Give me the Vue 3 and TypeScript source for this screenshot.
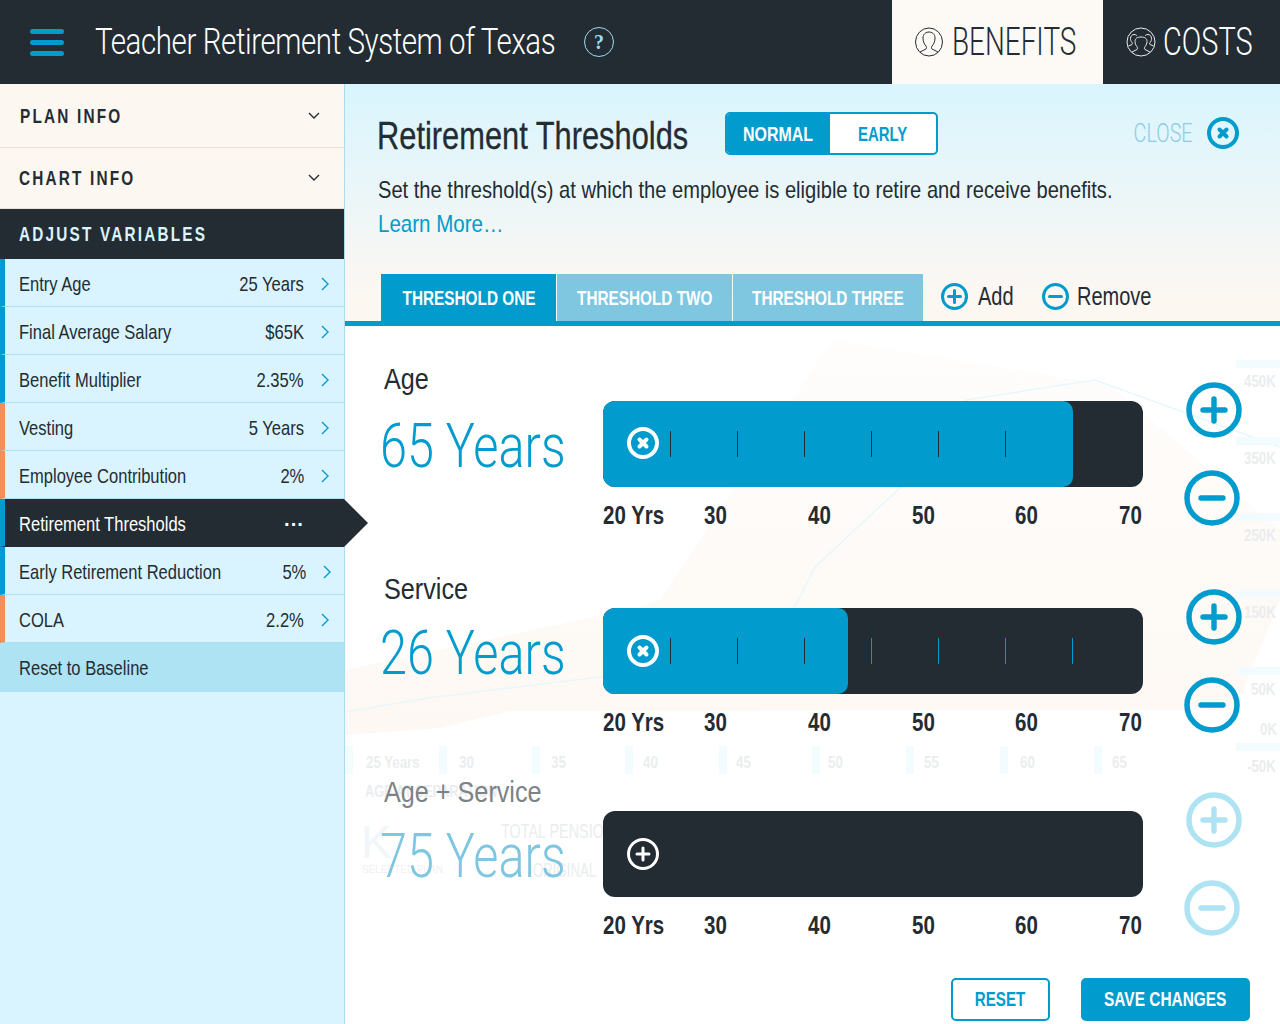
<script setup lang="ts">
interface Row { label: string; value: string; accent: 'blue' | 'orange'; active?: boolean }
const rows: Row[] = [
  { label: 'Entry Age', value: '25 Years', accent: 'blue' },
  { label: 'Final Average Salary', value: '$65K', accent: 'blue' },
  { label: 'Benefit Multiplier', value: '2.35%', accent: 'blue' },
  { label: 'Vesting', value: '5 Years', accent: 'orange' },
  { label: 'Employee Contribution', value: '2%', accent: 'orange' },
  { label: 'Retirement Thresholds', value: '···', accent: 'blue', active: true },
  { label: 'Early Retirement Reduction', value: '5%', accent: 'blue' },
  { label: 'COLA', value: '2.2%', accent: 'orange' },
]
interface Slider { title: string; value: string; fill: number; on: boolean; ticks: string[] }
const sliders: Slider[] = [
  { title: 'Age', value: '65 Years', fill: 470, on: true, ticks: ['d','d','d','d','d','d'] },
  { title: 'Service', value: '26 Years', fill: 245, on: true, ticks: ['d','d','d','b','b','b','b'] },
  { title: 'Age + Service', value: '75 Years', fill: 0, on: false, ticks: [] },
]
const axis = ['20 Yrs', '30', '40', '50', '60', '70']
interface Ghost { t: string; x: number; y: number; c?: string; sx?: number }
const ghostTexts: Ghost[] = [
  { t: '450K', x: 1244, y: 387 }, { t: '350K', x: 1244, y: 464 }, { t: '250K', x: 1244, y: 541 },
  { t: '150K', x: 1244, y: 618 }, { t: '50K', x: 1251, y: 695 }, { t: '0K', x: 1260, y: 735 }, { t: '-50K', x: 1247, y: 772 },
  { t: '25 Years', x: 366, y: 768 }, { t: '30', x: 459, y: 768 }, { t: '35', x: 551, y: 768 }, { t: '40', x: 643, y: 768 },
  { t: '45', x: 736, y: 768 }, { t: '50', x: 828, y: 768 }, { t: '55', x: 924, y: 768 }, { t: '60', x: 1020, y: 768 }, { t: '65', x: 1112, y: 768 },
  { t: 'AGE AT SEPARATION', x: 365, y: 797, sx: .8 },
  { t: 'TOTAL PENSION', x: 501, y: 838, c: 'g2', sx: .72 }, { t: 'ORIGINAL', x: 533, y: 877, c: 'g2', sx: .66 },
  { t: 'K', x: 361, y: 858, c: 'g3', sx: 1 },
  { t: 'SELECTED PLAN', x: 362, y: 873, c: 'g4', sx: .9 },
]
</script>

<template>
  <div class="page">
    <header class="top">
      <div class="burger"><i></i><i></i><i></i></div>
      <h1 class="brand"><span>Teacher Retirement System of Texas</span></h1>
      <span class="help">?</span>
      <div class="spacer"></div>
      <div class="tab-b">
        <svg width="28" height="30" viewBox="0 0 28 30" fill="none" stroke="#232c33" stroke-width="1"><ellipse cx="14" cy="15" rx="13.500" ry="14"/><path d="M5 25l6-3c1-1 .5-2 0-3-2-2-3-5-3-8 0-4 3-6 6-6s6 2 6 6c0 3-1 6-3 8-.5 1-1 2 0 3l6 3"/></svg>
        <span class="txt">BENEFITS</span>
      </div>
      <div class="tab-c">
        <svg width="30" height="30" viewBox="0 0 30 30" fill="none" stroke="#e8ecee" stroke-width="1"><circle cx="15" cy="15" r="14"/><path d="M6 25l5-2.500c1-.7.5-2-.2-3-1-1.500-1.800-3-1.800-5 0-3 2-4.500 6-4.500s6 1.500 6 4.500c0 2-.8 3.500-1.800 5-.7 1-1.200 2.300-.2 3l5 2.500"/><path d="M2.500 19l3.500-1.500c.8-.5.3-1.500-.2-2.200-1-1.300-1.300-2.500-1.300-4 0-2 1.500-3.800 3.500-3.800 1.200 0 2 .3 2.800 1M27.500 19l-3.500-1.500c-.8-.5-.3-1.500.2-2.200 1-1.300 1.300-2.500 1.300-4 0-2-1.500-3.800-3.500-3.800-1.200 0-2 .3-2.800 1"/></svg>
        <span class="txt">COSTS</span>
      </div>
    </header>
    <div class="body">
      <aside class="side">
        <div class="acc first"><span class="cap">PLAN INFO</span><svg width="12" height="8" viewBox="0 0 12 8" fill="none" stroke="#232c33" stroke-width="1.4"><path d="M1 1l5 5 5-5"/></svg></div>
        <div class="acc second"><span class="cap">CHART INFO</span><svg width="12" height="8" viewBox="0 0 12 8" fill="none" stroke="#232c33" stroke-width="1.4"><path d="M1 1l5 5 5-5"/></svg></div>
        <div class="adj"><span class="cap">ADJUST VARIABLES</span></div>
        <div v-for="r in rows" :key="r.label" class="row" :class="[r.accent, { active: r.active }]">
          <span class="lbl">{{ r.label }}</span>
          <span class="val">{{ r.value }}</span>
          <svg v-if="!r.active" class="chev" width="8" height="14" viewBox="0 0 8 14" fill="none" stroke="#019bcd" stroke-width="1.4"><path d="M1 1l6 6-6 6"/></svg>
        </div>
        <div class="reset-row"><span class="lbl">Reset to Baseline</span></div>
      </aside>
      <main class="main">
        <section class="intro">
          <div class="head">
            <h2><span>Retirement Thresholds</span></h2>
            <div class="toggle"><span class="on"><b>NORMAL</b></span><span class="off"><b>EARLY</b></span></div>
            <div class="spacer"></div>
            <span class="close">CLOSE</span>
            <svg class="closex" width="34" height="34" viewBox="0 0 34 34" fill="none" stroke="#019bcd"><circle cx="17" cy="17" r="14" stroke-width="4"/><path d="M13.500 13.500l7 7M20.500 13.500l-7 7" stroke-width="4" stroke-linecap="round"/></svg>
          </div>
          <p class="desc"><span>Set the threshold(s) at which the employee is eligible to retire and receive benefits.</span></p>
          <a class="more"><span>Learn More…</span></a>
          <div class="tabs">
            <div class="t cur"><span>THRESHOLD ONE</span></div>
            <div class="t two"><span>THRESHOLD TWO</span></div>
            <div class="t three"><span>THRESHOLD THREE</span></div>
            <div class="act add"><svg width="27" height="27" viewBox="0 0 27 27" fill="none" stroke="#019bcd"><circle cx="13.500" cy="13.500" r="12" stroke-width="3"/><path d="M13.500 7.500v12M7.500 13.500h12" stroke-width="3" stroke-linecap="round"/></svg><span>Add</span></div>
            <div class="act rem"><svg width="27" height="27" viewBox="0 0 27 27" fill="none" stroke="#019bcd"><circle cx="13.500" cy="13.500" r="12" stroke-width="3"/><path d="M7.500 13.500h12" stroke-width="3" stroke-linecap="round"/></svg><span>Remove</span></div>
          </div>
        </section>
        <section class="panel">
          <svg class="ghost" width="935" height="698" viewBox="345 326 935 698" fill="none">
            <defs><linearGradient id="cream" x1="0" y1="0" x2="0" y2="1"><stop offset="0" stop-color="#fdf7f1" stop-opacity=".25"/><stop offset="1" stop-color="#fdf7f1" stop-opacity=".85"/></linearGradient></defs>
            <path d="M345 670L640 607L660 600L832 340L1110 385L1280 530L1280 600L1235 710L510 711L440 728L345 735Z" fill="url(#cream)"/>
            <path d="M345 712L428 698L640 672L770 650L797 603L815 567L901 487L966 400L1095 380L1280 447" stroke="#e8f7fc" stroke-width="1.500"/>
            <g fill="#f2fbfe"><rect x="1236" y="360" width="44" height="8"/><rect x="1236" y="437" width="44" height="8"/><rect x="1236" y="513" width="44" height="8"/><rect x="1236" y="590" width="44" height="8"/><rect x="1236" y="667" width="44" height="8"/><rect x="1236" y="743" width="44" height="8"/>
              <rect x="345" y="746" width="8" height="28"/><rect x="439" y="746" width="8" height="28"/><rect x="532" y="746" width="8" height="28"/><rect x="625" y="746" width="8" height="28"/><rect x="719" y="746" width="8" height="28"/><rect x="812" y="746" width="8" height="28"/><rect x="906" y="746" width="8" height="28"/><rect x="1000" y="746" width="8" height="28"/><rect x="1094" y="746" width="8" height="28"/></g>
            <g class="gt" fill="#eaedee">
              <text v-for="g in ghostTexts" :key="g.t + g.x" :class="g.c" :transform="`translate(${g.x} ${g.y}) scale(${g.sx ?? 0.83} 1)`">{{ g.t }}</text>
            </g>
          </svg>
          <div v-for="(s, i) in sliders" :key="s.title" class="slider" :class="'s' + i">
            <div class="left">
              <div class="title"><span>{{ s.title }}</span></div>
              <div class="big">{{ s.value }}</div>
            </div>
            <div class="track-col">
              <div class="track">
                <div v-if="s.fill" class="fill" :style="{ width: s.fill + 'px' }"></div>
                <svg class="knob" width="32" height="32" viewBox="0 0 32 32" fill="none" stroke="#fff">
                  <template v-if="s.on">
                    <circle cx="16" cy="16" r="14" stroke-width="4"/>
                    <path d="M12.500 12.500l7 7M19.500 12.500l-7 7" stroke-width="4" stroke-linecap="round"/>
                  </template>
                  <template v-else>
                    <circle cx="16" cy="16" r="14.500" stroke-width="3"/>
                    <path d="M16 10v12M10 16h12" stroke-width="3" stroke-linecap="round"/>
                  </template>
                </svg>
                <div class="ticks"><i v-for="(t, k) in s.ticks" :key="k" :class="t"></i></div>
              </div>
              <div class="axis"><div v-for="a in axis" :key="a"><span>{{ a }}</span></div></div>
            </div>
            <div class="steps" :class="{ dim: !s.on }">
              <svg class="plus" width="56" height="56" viewBox="0 0 56 56" fill="none" stroke="currentColor"><circle cx="28" cy="28" r="25" stroke-width="5.500"/><path d="M28 17v22M17 28h22" stroke-width="5.400" stroke-linecap="round"/></svg>
              <svg class="minus" width="56" height="56" viewBox="0 0 56 56" fill="none" stroke="currentColor"><circle cx="28" cy="28" r="25" stroke-width="5.500"/><path d="M17 28h22" stroke-width="5.400" stroke-linecap="round"/></svg>
            </div>
          </div>
          <div class="btns">
            <div class="reset"><span>RESET</span></div>
            <div class="save"><span>SAVE CHANGES</span></div>
          </div>
        </section>
      </main>
    </div>
  </div>
</template>

<style>
html, body { margin: 0; background: #fff; }
</style>

<style scoped>
.page { width: 1280px; height: 1024px; overflow: hidden; font-family: "Liberation Sans", Arial, sans-serif; color: #232c33; display: flex; flex-direction: column; }
.spacer { flex: 1; }
.top { height: 84px; background: #232c33; display: flex; align-items: center; flex: none; }
.burger { margin-left: 30px; width: 34px; display: flex; flex-direction: column; gap: 6px; flex: none; }
.burger i { display: block; height: 5px; border-radius: 3px; background: #019bcd; }
.brand { margin: 0 0 0 31px; width: 461px; font: 300 36px/1 Roboto, sans-serif; color: #fff; white-space: nowrap; flex: none; }
.brand span { display: inline-block; letter-spacing: -.5px; transform: scaleX(.819); transform-origin: left center; }
.help { margin-left: 28px; width: 30px; height: 30px; box-sizing: border-box; border: 1px solid #9fdcf2; border-radius: 50%; color: #9fdcf2; font: 700 20px/28px "Liberation Serif", serif; text-align: center; flex: none; }
.tab-b, .tab-c { height: 84px; display: flex; align-items: center; font: 300 38px/1 Roboto, sans-serif; box-sizing: border-box; flex: none; }
.tab-b { width: 211px; background: #fdf9f5; color: #232c33; padding-left: 23px; gap: 9px; }
.tab-c { width: 177px; color: #fff; padding-left: 23px; gap: 7px; }
.tab-b svg, .tab-c svg { flex: none; }
.txt { display: inline-block; transform-origin: left center; white-space: nowrap; flex: none; }
.tab-b .txt { transform: scaleX(.734); }
.tab-c .txt { transform: scaleX(.76); }
.body { flex: 1; display: flex; min-height: 0; }
.side { width: 345px; flex: none; box-sizing: border-box; background: #d9f4fe; border-right: 1px solid #a9dcee; }
.cap { display: inline-block; white-space: nowrap; font: 700 21px/1 "Liberation Sans", sans-serif; letter-spacing: 3px; transform: scaleX(.73); transform-origin: left center; }
.acc { background: #fdf7f1; display: flex; align-items: center; justify-content: space-between; padding-right: 24px; }
.acc .cap { margin-bottom: 1px; }
.first { height: 63px; border-bottom: 1px solid #f0ded2; padding-left: 20px; }
.second { height: 60px; border-bottom: 1px solid #f0ded2; padding-left: 19px; }
.adj { height: 50px; background: #232c33; color: #d9f4fe; display: flex; align-items: center; padding-left: 19px; }
.adj .cap { margin-bottom: 2px; }
.row { border-bottom: 1px solid #a9e0f2; border-left: 5px solid #019bcd; padding: 3px 15px 0 14px; box-sizing: content-box; display: flex; align-items: center; font-size: 21px; height: 44px; }
.row.orange { border-left-color: #f68d56; }
.lbl { flex: none; white-space: nowrap; display: inline-block; transform: scaleX(.787); transform-origin: left center; }
.val { margin-left: auto; margin-right: 17px; white-space: nowrap; transform: scaleX(.79); transform-origin: right center; }
.row.active { background: #232c33; color: #fff; position: relative; border-bottom-color: #232c33; }
.row.active::after { content: ""; position: absolute; right: -24px; top: 0; border-left: 24px solid #232c33; border-top: 24px solid transparent; border-bottom: 24px solid transparent; z-index: 3; }
.row.active .val { margin-right: 25px; font-size: 20px; font-weight: 700; transform: none; }
.chev { flex: none; }
.reset-row { height: 49px; background: #ade3f3; display: flex; align-items: center; padding-left: 19px; font-size: 21px; }
.main { flex: 1; display: flex; flex-direction: column; min-width: 0; }
.intro { height: 242px; flex: none; box-sizing: border-box; border-bottom: 5px solid #019bcd; background: linear-gradient(#d9f5fe, #fdf7f2 92%); display: flex; flex-direction: column; padding-left: 33px; }
.head { display: flex; align-items: center; margin-top: 28px; height: 43px; padding-right: 40px; flex: none; }
.head h2 { margin: 4px 0 0 -1px; font: 400 38px/1 "Liberation Sans", sans-serif; color: #232c33; width: 348px; white-space: nowrap; flex: none; }
.head h2 span { display: inline-block; transform: scaleX(.811); transform-origin: left center; -webkit-text-stroke: .3px #232c33; }
.toggle { display: flex; width: 213px; height: 43px; box-sizing: border-box; border: 2px solid #019bcd; border-radius: 5px; background: #fff; overflow: hidden; font: 700 21px/39px "Liberation Sans", sans-serif; color: #019bcd; flex: none; }
.toggle .on { width: 103px; background: #019bcd; color: #fff; text-align: center; flex: none; }
.toggle .off { flex: 1; text-align: center; }
.toggle b { display: inline-block; }
.toggle .on b { transform: scaleX(.76); }
.toggle .off b { transform: scaleX(.71); }
.close { color: #8fcbe3; font: 300 26px/1 Roboto, sans-serif; margin: 0 13px 2px 0; display: inline-block; transform: scaleX(.76); transform-origin: right center; flex: none; }
.closex { flex: none; margin-bottom: 2px; }
.desc { margin: 21px 0 0; font-size: 24px; line-height: 28px; white-space: nowrap; }
.desc span { display: inline-block; transform: scaleX(.838); transform-origin: left center; }
.more { margin-top: 6px; font-size: 24px; line-height: 28px; color: #019bcd; }
.more span { display: inline-block; transform: scaleX(.855); transform-origin: left center; }
.tabs { margin-top: auto; margin-left: 3px; display: flex; align-items: stretch; height: 47px; flex: none; }
.t { display: flex; align-items: center; justify-content: center; font: 700 21px/1 "Liberation Sans", sans-serif; color: #fff; background: #7fc6e1; white-space: nowrap; flex: none; }
.t span { flex: none; transform: scaleX(.73); }
.t.cur { width: 175px; background: #019bcd; }
.t.two { width: 175px; margin-left: 1px; }
.t.three { width: 190px; margin-left: 1px; }
.act { display: flex; align-items: center; margin-left: 18px; font-size: 25px; flex: none; }
.act.rem { margin-left: 20px; }
.act svg { flex: none; margin-top: -3px; }
.act span { display: inline-block; margin-left: 10px; transform: scaleX(.8); transform-origin: left center; margin-top: -3px; }
.act.rem span { margin-left: 8px; }
.panel { flex: 1; position: relative; background: #fff; }
.ghost { position: absolute; left: 0; top: 0; }
.gt { font: 700 16px "Liberation Sans", sans-serif; }
.g2 { font-size: 20px; font-weight: 400; }
.g3 { font-size: 46px; font-weight: 400; fill: #f1f6f8; }
.g4 { font-size: 11px; font-weight: 400; fill: #eff1f2; }
.slider { position: relative; display: flex; padding-left: 36px; box-sizing: border-box; }
.s0 { height: 207px; padding-top: 35px; }
.s1 { height: 203px; padding-top: 38px; }
.s2 { height: 240px; padding-top: 38px; }
.left { width: 222px; flex: none; }
.title { font-size: 30px; line-height: 36px; color: #232c33; padding-left: 3px; white-space: nowrap; }
.title span { display: inline-block; transform: scaleX(.84); transform-origin: left center; }
.s2 .title { color: #7d8286; }
.big { font: 300 62px/1 Roboto, sans-serif; color: #019bcd; margin: 15px 0 0 -1px; display: inline-block; transform: scaleX(.784); transform-origin: left center; white-space: nowrap; }
.s0 .big { margin-top: 18px; }
.s2 .big { color: #7fc6e1; }
.track-col { width: 540px; flex: none; margin-top: 37px; }
.s0 .track-col { margin-top: 40px; }
.track { position: relative; height: 86px; border-radius: 12px; background: #232c33; display: flex; align-items: center; overflow: hidden; }
.fill { position: absolute; left: 0; top: 0; bottom: 0; background: #019bcd; border-radius: 0 10px 10px 0; }
.knob { position: relative; margin-left: 24px; flex: none; }
.s0 .knob { margin-top: -2px; }
.ticks { position: relative; display: flex; margin-left: 11px; gap: 66px; }
.ticks i { display: block; width: 1px; height: 26px; }
.ticks i.d { background: #232c33; }
.ticks i.b { background: #019bcd; }
.axis { display: grid; grid-template-columns: 61px 63px repeat(4, 103.750px); margin-top: 14px; font-weight: 700; font-size: 25px; line-height: 28px; white-space: nowrap; }
.axis div { text-align: right; }
.axis span { display: inline-block; transform: scaleX(.82); transform-origin: right center; }
.axis div:first-child { text-align: left; }
.axis div:first-child span { transform-origin: left center; }
.steps { position: relative; width: 126px; display: flex; flex-direction: column; align-items: center; gap: 32px; color: #019bcd; margin-top: 18px; padding-left: 16px; box-sizing: border-box; flex: none; }
.steps svg { flex: none; }
.s0 .steps { margin-top: 21px; }
.steps.dim { color: #ade3f3; }
.steps .minus { transform: translateX(-2px); }
.btns { position: absolute; left: 606px; top: 652px; display: flex; gap: 31px; }
.btns > div { height: 43px; box-sizing: border-box; border-radius: 5px; display: flex; align-items: center; justify-content: center; font: 700 21px/1 "Liberation Sans", sans-serif; white-space: nowrap; padding-bottom: 2px; }
.btns span { flex: none; }
.reset { width: 99px; border: 2px solid #019bcd; color: #019bcd; background: #fff; }
.reset span { transform: scaleX(.72); }
.save { width: 169px; background: #019bcd; color: #fff; }
.save span { transform: scaleX(.735); }
</style>
